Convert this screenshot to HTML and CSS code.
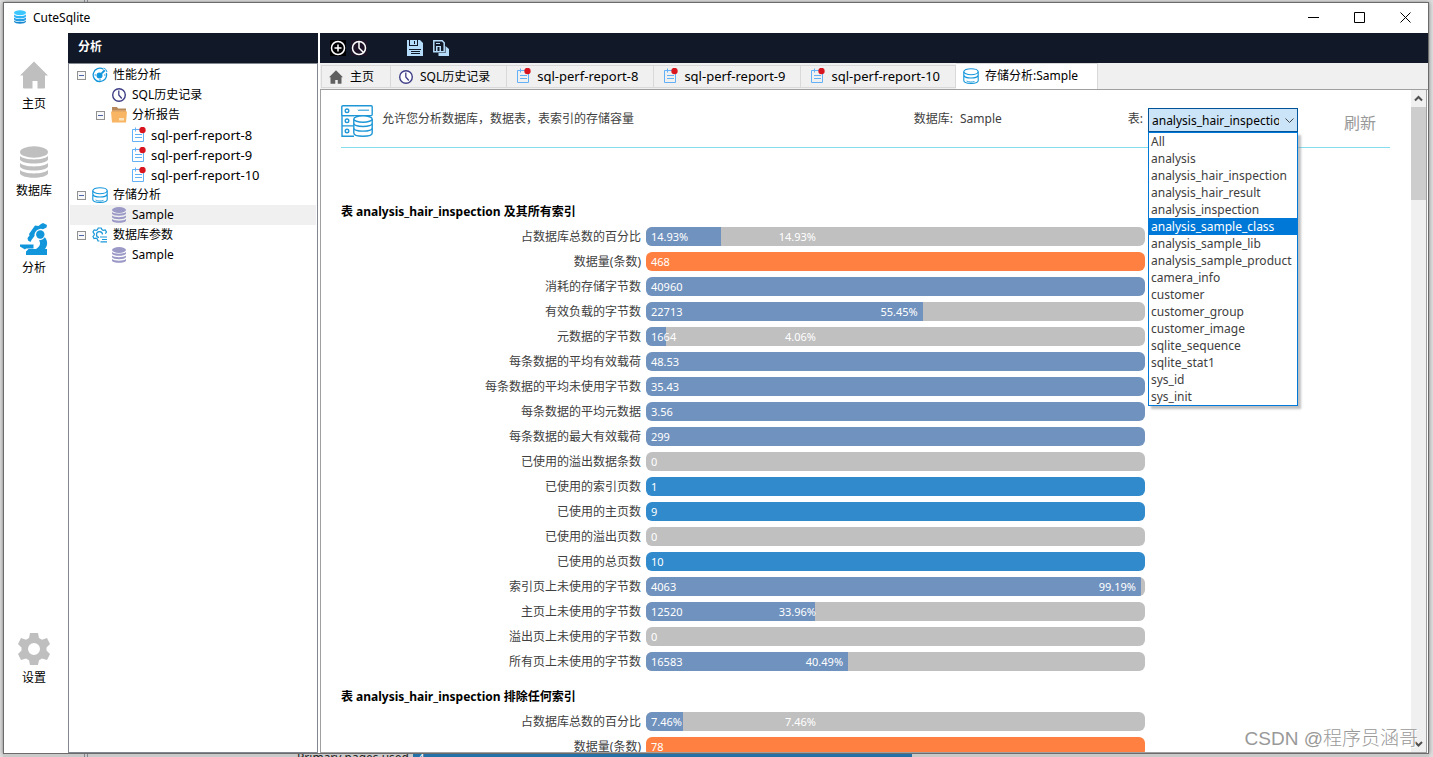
FILE: index.html
```html
<!DOCTYPE html>
<html lang="zh-CN">
<head>
<meta charset="utf-8">
<title>CuteSqlite</title>
<link rel="stylesheet" href="styles.css">
</head>
<body>
<svg class="symbols" aria-hidden="true">
  <symbol id="i-home" viewBox="0 0 32 32"><path d="M16 2.500 30 16.500h-3V28.500a1 1 0 0 1-1 1h-6.500v-7.500h-5v7.500H6a1 1 0 0 1-1-1V16.500H2z" fill="currentColor"/></symbol>
  <symbol id="i-dbsolid" viewBox="0 0 32 32"><g fill="currentColor"><ellipse cx="16" cy="6" rx="14" ry="5.800"/><path d="M2 10c4 4.500 24 4.500 28 0v3.500c-2 5.300-26 5.300-28 0zM2 17c4 4.500 24 4.500 28 0v3.500c-2 5.300-26 5.300-28 0zM2 24c4 4.500 24 4.500 28 0v3.500c-2 5.600-26 5.600-28 0z"/></g></symbol>
  <symbol id="i-scope" viewBox="0 0 32 32"><g fill="#1296db"><path d="m23 1 2-1 4 2-.5 2.500-2 1-1.500.7a6.500 6.500 0 0 0-8.500 6.800L13.500 17l-1 2-2.500-1.500-.5-2.500 2-2.500-.5-1.500 6-8.500 3.500.5z"/><circle cx="22.300" cy="11.500" r="4.200"/><path d="M21 17.200c2.500 0 4.500-1 5.800-3 3 3.300 3.200 7.800.2 11.800h2v6H8v-3.500L10.500 26H18c4-2.500 5-5.500 3-8.800z"/><path d="M2 21.500h13.500v4H8l-1 1-5-3z"/></g></symbol>
  <symbol id="i-gear" viewBox="0 0 32 32"><path fill="#bfbfbf" fill-rule="evenodd" d="M12 0h8l1 5 3 1.700 5-1.700 3 6-3.500 3.500v3L32 21l-3 6-5-1.500-3 1.800-1 4.700h-8l-1-4.700-3-1.800L3 27l-3-6 3.500-3.500v-3L0 11l3-6 5 1.700L11 5zM16 10a6 6 0 1 0 0 12 6 6 0 0 0 0-12z"/></symbol>
  <symbol id="i-perf" viewBox="0 0 16 16"><g fill="none" stroke="#1296db" stroke-width="1.300"><path d="M11.500 2.300A6.700 6.700 0 1 0 14.300 6"/><path d="M12 .800A8 8 0 0 1 15 5M2.500 8h1.500M8 12v1.800M13.500 8H12" stroke-width="1"/></g><circle cx="7.500" cy="8.500" r="3" fill="#1296db"/><path d="m7 8 5-5.500 1.500 1.500-5.500 5z" fill="#1296db"/></symbol>
  <symbol id="i-clock" viewBox="0 0 16 16"><circle cx="8" cy="8" r="6.300" fill="#fff" stroke="#3f3f87" stroke-width="1.400"/><path d="M7.800 3.500V8l3 3.500" fill="none" stroke="#3f3f87" stroke-width="1.300"/></symbol>
  <symbol id="i-folder" viewBox="0 0 16 16"><path d="M1 0h5l1 1.500h8V8H1z" fill="#b88a5b"/><path d="M1 3h14v3H1z" fill="#d9a066"/><path d="M0 4.500h16l-1 11H1z" fill="#f8b563"/><path d="M8 11h5v2.500H8z" fill="#fbe3bd"/></symbol>
  <symbol id="i-report" viewBox="0 0 16 16"><path d="M2.500 2.500h11v12h-11zM5.500.500v4M5 7.500h7M5 10.500h7" fill="none" stroke="#62b0f5"/><circle cx="12.500" cy="3" r="3.200" fill="#d8151f"/></symbol>
  <symbol id="i-dbline" viewBox="0 0 16 16"><g fill="none" stroke="#1296db" stroke-width="1.100"><ellipse cx="8" cy="3.700" rx="7.200" ry="3"/><path d="M.800 3.700v8.800c0 3.800 14.400 3.800 14.400 0V3.700M1 7.500c1 3.400 13 3.400 14 0"/><path d="M3.500 13c2 1 5 1.400 8 .4" stroke-width=".8"/></g></symbol>
  <symbol id="i-param" viewBox="0 0 16 16"><g fill="none" stroke="#1b98d9" stroke-width="1.200"><path d="M7.500 14H6l-.7-2-1.300-.8-2 .4L1 9.500l1.300-1.700v-1L1 5l1.200-2 2 .4L5.500 2.500 6.200 1h3l.7 1.500 1.300.9 2-.4L14.500 5l-1.200 1.700"/><path d="M7 10.500a3 3 0 1 1 3.500-3M8 10h7M10 12.500h5M8.500 14.800H15"/></g></symbol>
  <symbol id="i-server" viewBox="0 0 32 32"><g fill="none" stroke="#1f97d6" stroke-width="1.400"><rect x=".8" y=".8" width="30.400" height="9.800" rx="1"/><path d="M13 10.600H1v10.300h11M12 20.900H1v10.300h12"/><circle cx="6" cy="5.800" r="1.800"/><circle cx="6" cy="15.800" r="1.800"/><circle cx="6" cy="26" r="1.800"/><path d="m17 4.500 1 1.500 1-1.500 1 1.500 1-1.500 1 1.500 1-1.500 1 1.500 1-1.500 1 1.500 1-1.500 1 1.500" stroke-width=".8"/></g><g fill="#fff" stroke="#1f97d6" stroke-width="1.400"><path d="M12.800 14v14c0 4.300 18.400 4.300 18.400 0V14"/><ellipse cx="22" cy="14" rx="9.200" ry="3.200"/><path d="M12.800 18.800c1 3.500 17.400 3.500 18.400 0M12.800 23.500c1 3.500 17.400 3.500 18.400 0" fill="none"/></g></symbol>
</svg>

<div class="desktop">
  <div class="backdrop-top"><i class="rail"></i></div>
  <div class="window">
    <header class="titlebar">
      <svg class="app-icon" viewBox="0 0 14 14"><ellipse cx="7" cy="2.700" rx="6" ry="2.500" fill="#3cc8ff"/><path d="M1 4.500c2 2 10 2 12 0v2c-1 2.500-11 2.500-12 0z" fill="#2fb4f5"/><path d="M1 7.500c2 2 10 2 12 0v2c-1 2.500-11 2.500-12 0z" fill="#259fe6"/><path d="M1 10.500c2 2 10 2 12 0v1c-1 3-11 3-12 0z" fill="#1788d0"/></svg>
      <h1 class="app-name">CuteSqlite</h1>
      <button class="win-btn" aria-label="最小化"><svg viewBox="0 0 11 11"><path d="M0 5.500h11"/></svg></button>
      <button class="win-btn" aria-label="最大化"><svg viewBox="0 0 11 11"><path d="M.5.5h10v10H.5z"/></svg></button>
      <button class="win-btn" aria-label="关闭"><svg viewBox="0 0 11 11"><path d="m.5.500 10 10M10.500.500l-10 10"/></svg></button>
    </header>

    <div class="workspace">
      <nav class="rail-nav">
        <button class="nav-item nav-home"><svg><use href="#i-home"/></svg>主页</button>
        <button class="nav-item"><svg><use href="#i-dbsolid"/></svg>数据库</button>
        <button class="nav-item"><svg><use href="#i-scope"/></svg>分析</button>
        <button class="nav-item nav-settings"><svg><use href="#i-gear"/></svg>设置</button>
      </nav>

      <aside class="side">
        <h2 class="side-title">分析</h2>
        <ul class="tree">
          <li class="node level-0"><button class="toggle" aria-label="折叠"></button><svg><use href="#i-perf"/></svg>性能分析</li>
          <li class="node level-1"><i class="toggle-space"></i><svg><use href="#i-clock"/></svg>SQL历史记录</li>
          <li class="node level-1"><button class="toggle" aria-label="折叠"></button><svg><use href="#i-folder"/></svg>分析报告</li>
          <li class="node level-2 report-name"><i class="toggle-space"></i><svg><use href="#i-report"/></svg>sql-perf-report-8</li>
          <li class="node level-2 report-name"><i class="toggle-space"></i><svg><use href="#i-report"/></svg>sql-perf-report-9</li>
          <li class="node level-2 report-name"><i class="toggle-space"></i><svg><use href="#i-report"/></svg>sql-perf-report-10</li>
          <li class="node level-0"><button class="toggle" aria-label="折叠"></button><svg><use href="#i-dbline"/></svg>存储分析</li>
          <li class="node level-1 selected"><i class="toggle-space"></i><svg class="violet"><use href="#i-dbsolid"/></svg>Sample</li>
          <li class="node level-0"><button class="toggle" aria-label="折叠"></button><svg><use href="#i-param"/></svg>数据库参数</li>
          <li class="node level-1"><i class="toggle-space"></i><svg class="violet"><use href="#i-dbsolid"/></svg>Sample</li>
        </ul>
      </aside>

      <main class="main">
        <div class="toolbar">
          <button class="tool" aria-label="新建"><svg viewBox="0 0 16 16"><path fill="#000" d="M0 0h16v16H0z"/><g fill="none" stroke="#fff" stroke-width="1.500"><circle cx="8" cy="8" r="6.500"/><path d="M8 4.500v7M4.500 8h7"/></g></svg></button>
          <button class="tool" aria-label="历史"><svg viewBox="0 0 16 16"><path fill="#1d1226" d="M0 0h16v16H0z"/><g fill="none" stroke="#fff" stroke-width="1.500"><circle cx="8" cy="8" r="6.500"/><path d="M8 1.500V8l4.500 4.500"/></g></svg></button>
          <button class="tool tool-save" aria-label="保存"><svg viewBox="0 0 16 16"><path fill="#b5dcfb" d="M0 0h13l3 3v13H0z"/><path fill="#111827" d="M2 0h1v6H2zM3 5h8v1H3zM10 0h1v6h-1z"/><path fill="#111827" d="M7 1h1v3H7zM2 9h12v1H2zM4 11h9v1H4zM4 13h9v1H4z"/></svg></button>
          <button class="tool tool-save-all" aria-label="全部保存"><svg viewBox="0 0 16 16"><path fill="none" stroke="#b5dcfb" stroke-width="1.500" d="M.8.800h8.400l2 2v9H.800z"/><path fill="#b5dcfb" d="M3 3h4v1H3zM3 6h5v6H3z"/><path fill="#111827" d="M4.500 7h2v4h-2z"/><path fill="#b5dcfb" d="M12.500 6 16 9v7H5.500v-3h7z"/></svg></button>
        </div>

        <div class="tabs" role="tablist">
          <button class="tab" role="tab"><svg class="gray"><use href="#i-home"/></svg>主页</button>
          <button class="tab" role="tab"><svg><use href="#i-clock"/></svg>SQL历史记录</button>
          <button class="tab report-name" role="tab"><svg><use href="#i-report"/></svg>sql-perf-report-8</button>
          <button class="tab report-name" role="tab"><svg><use href="#i-report"/></svg>sql-perf-report-9</button>
          <button class="tab report-name" role="tab"><svg><use href="#i-report"/></svg>sql-perf-report-10</button>
          <button class="tab active" role="tab" aria-selected="true"><svg><use href="#i-dbline"/></svg>存储分析:Sample</button>
        </div>

        <div class="page">
          <div class="content">
            <div class="filter">
              <svg class="server"><use href="#i-server"/></svg>
              <p class="intro">允许您分析数据库，数据表，表索引的存储容量</p>
              <p class="database"><span>数据库:</span><span>Sample</span></p>
              <label class="table-label" for="table">表:</label>
              <div class="combo">
                <select id="table" class="combo-box"><option>analysis_hair_inspection</option></select>
                <svg class="chevron" viewBox="0 0 9 9"><path d="m.5 2.500 4 4 4-4"/></svg>
                <ul class="options" role="listbox">
                  <li>All</li><li>analysis</li><li>analysis_hair_inspection</li><li>analysis_hair_result</li><li>analysis_inspection</li><li class="hover">analysis_sample_class</li><li>analysis_sample_lib</li><li>analysis_sample_product</li><li>camera_info</li><li>customer</li><li>customer_group</li><li>customer_image</li><li>sqlite_sequence</li><li>sqlite_stat1</li><li>sys_id</li><li>sys_init</li>
                </ul>
              </div>
              <button class="refresh">刷新</button>
            </div>

            <section class="report">
              <h3>表 analysis_hair_inspection 及其所有索引</h3>
              <div class="row"><span>占数据库总数的百分比</span><div class="bar"><i style="width:14.93%"></i><b style="width:14.93%">14.93%</b><em>14.93%</em></div></div>
              <div class="row"><span>数据量(条数)</span><div class="bar orange"><em>468</em></div></div>
              <div class="row"><span>消耗的存储字节数</span><div class="bar steel"><em>40960</em></div></div>
              <div class="row"><span>有效负载的字节数</span><div class="bar"><i style="width:55.45%"></i><b style="width:55.45%">55.45%</b><em>22713</em></div></div>
              <div class="row"><span>元数据的字节数</span><div class="bar"><i style="width:4.06%"></i><b style="width:4.06%">4.06%</b><em>1664</em></div></div>
              <div class="row"><span>每条数据的平均有效载荷</span><div class="bar steel"><em>48.53</em></div></div>
              <div class="row"><span>每条数据的平均未使用字节数</span><div class="bar steel"><em>35.43</em></div></div>
              <div class="row"><span>每条数据的平均元数据</span><div class="bar steel"><em>3.56</em></div></div>
              <div class="row"><span>每条数据的最大有效载荷</span><div class="bar steel"><em>299</em></div></div>
              <div class="row"><span>已使用的溢出数据条数</span><div class="bar"><em>0</em></div></div>
              <div class="row"><span>已使用的索引页数</span><div class="bar blue"><em>1</em></div></div>
              <div class="row"><span>已使用的主页数</span><div class="bar blue"><em>9</em></div></div>
              <div class="row"><span>已使用的溢出页数</span><div class="bar"><em>0</em></div></div>
              <div class="row"><span>已使用的总页数</span><div class="bar blue"><em>10</em></div></div>
              <div class="row"><span>索引页上未使用的字节数</span><div class="bar"><i style="width:99.19%"></i><b style="width:99.19%">99.19%</b><em>4063</em></div></div>
              <div class="row"><span>主页上未使用的字节数</span><div class="bar"><i style="width:33.96%"></i><b style="width:33.96%">33.96%</b><em>12520</em></div></div>
              <div class="row"><span>溢出页上未使用的字节数</span><div class="bar"><em>0</em></div></div>
              <div class="row"><span>所有页上未使用的字节数</span><div class="bar"><i style="width:40.49%"></i><b style="width:40.49%">40.49%</b><em>16583</em></div></div>
            </section>
            <section class="report">
              <h3>表 analysis_hair_inspection 排除任何索引</h3>
              <div class="row"><span>占数据库总数的百分比</span><div class="bar"><i style="width:7.46%"></i><b style="width:7.46%">7.46%</b><em>7.46%</em></div></div>
              <div class="row"><span>数据量(条数)</span><div class="bar orange"><em>78</em></div></div>
            </section>
          </div>
          <div class="scrollbar">
            <svg class="arrow" viewBox="0 0 9 9"><path d="m1 6.500 3.500-3.500L8 6.500"/></svg>
            <div class="thumb"></div>
            <svg class="arrow arrow-down" viewBox="0 0 9 9"><path d="m1 3 3.500 3.500L8 3"/></svg>
          </div>
        </div>
      </main>
    </div>
  </div>
  <div class="backdrop-bottom"><i class="rail"></i><span class="under-label">Primary pages used</span><div class="under-bar">4</div></div>
  <div class="watermark">CSDN @程序员涵哥</div>
</div>
</body>
</html>
```

FILE: styles.css
```css
* { box-sizing: border-box; }
body, h1, h2, h3, p, ul { margin: 0; padding: 0; }
ul { list-style: none; }
svg { display: block; flex: none; }
button { border: 0; padding: 0; background: none; font: inherit; color: inherit; }
body, select {
  font-family: "Noto Sans", "Noto Sans CJK SC", sans-serif;
  font-size: 12px;
}
body { color: #000; line-height: 20px; }
.symbols { position: absolute; width: 0; height: 0; }

.desktop {
  position: relative;
  display: flex;
  flex-direction: column;
  height: 100vh;
  overflow: hidden;
  padding: 0 4px 0 3px;
  background: #dedede;
}
.backdrop-top { height: 2px; padding-left: 81px; background: #e6e6e6; flex: none; }
.rail { display: block; width: 4px; height: 100%; border: solid #82878f; border-width: 0 1px; }
.backdrop-bottom { display: flex; height: 3px; padding-left: 81px; overflow: hidden; background: #c9c9c9; flex: none; }
.backdrop-bottom .rail { height: 3px; }
.under-label { width: 321px; text-align: right; line-height: 8px; color: #222; }
.under-bar { width: 499px; margin-left: 4px; padding-left: 5px; background: #2471a8; color: #fff; font-size: 11px; line-height: 8px; }

.window {
  flex: 1;
  min-height: 0;
  display: flex;
  flex-direction: column;
  background: #fff;
  border: 1px solid #6b6b6b;
  box-shadow: 0 0 4px #777;
}
.titlebar { display: flex; height: 30px; padding-left: 9px; flex: none; }
.app-icon { width: 14px; height: 14px; margin-top: 7px; }
.app-name { flex: 1; margin-left: 6px; font-size: 12px; font-weight: 400; line-height: 30px; }
.win-btn { display: grid; place-items: center; width: 46px; height: 28px; }
.win-btn svg { width: 11px; height: 11px; fill: none; stroke: #000; }

.workspace { flex: 1; min-height: 0; display: flex; }
.rail-nav { display: flex; flex-direction: column; gap: 23px; width: 64px; padding: 26px 4px 66px 0; }
.nav-item { display: flex; flex-direction: column; align-items: center; gap: 4px; line-height: 18px; }
.nav-item svg { width: 32px; height: 32px; color: #bfbfbf; }
.nav-home { margin-bottom: 10px; }
.nav-settings { margin-top: auto; }

.side { display: flex; flex-direction: column; width: 250px; margin-right: 2px; flex: none; }
.side-title { height: 30px; padding-left: 10px; background: #111827; color: #fff; font-size: 12px; line-height: 28px; }
.tree { flex: 1; padding: 1px; border: 1px solid #828790; }
.node { display: flex; align-items: center; height: 20px; line-height: 20px; }
.node svg { width: 16px; height: 16px; margin: 0 5px 0 6px; }
.level-0 { padding-left: 7px; }
.level-1 { padding-left: 26px; }
.level-2 { padding-left: 45px; }
.selected { background: #f0f0f0; }
.violet { color: #9b99c6; }
.report-name { padding-bottom: 1px; font-size: 13px; }
.toggle, .toggle-space { width: 9px; height: 9px; flex: none; }
.toggle { border: 1px solid #919191; background: linear-gradient(#4b63a7, #4b63a7) center / 5px 1px no-repeat #f7f7f7; }

.main { flex: 1; min-width: 0; display: flex; flex-direction: column; }
.toolbar { display: flex; align-items: center; height: 30px; padding-left: 10px; background: #111827; flex: none; }
.tool { width: 16px; height: 16px; margin-right: 5px; }
.tool-save { margin-left: 35px; margin-right: 10px; }

.tabs { display: flex; align-items: flex-start; height: 27px; padding-left: 1px; background: #f0f0f0; border-bottom: 1px solid #a0a0a0; flex: none; }
.tab { display: flex; align-items: center; gap: 6px; height: 23px; margin-top: 2px; padding: 0 16px 0 7px; border: 1px solid #d9d9d9; border-left-width: 0; }
.tab:first-child { border-left-width: 1px; padding-left: 6px; }
.tab svg { width: 16px; height: 16px; }
.tab.report-name { padding: 0 15px 1px 8px; }
.gray { color: #606060; }
.tab.active { height: 26px; margin-top: 0; padding: 0 19px 2px 7px; background: #fff; border-bottom: 0; }

.page { flex: 1; min-height: 0; display: flex; margin-right: 1px; border: 1px solid #a0a0a0; border-top: 0; }
.content { flex: 1; min-width: 0; overflow: hidden; padding: 15px 21px 0 20px; }
.filter { display: flex; align-items: flex-start; height: 43px; margin-bottom: 51px; border-bottom: 1px solid #84dded; color: #404040; }
.server { width: 32px; height: 32px; }
.intro { flex: 1; margin-left: 9px; line-height: 28px; }
.database { display: flex; gap: 7px; width: 214px; line-height: 28px; }
.table-label { line-height: 28px; margin-right: 5px; }
.combo { position: relative; width: 150px; margin-top: 3px; flex: none; }
.combo-box {
  display: block;
  width: 100%;
  height: 24px;
  padding: 0 18px 0 3px;
  appearance: none;
  border: 1px solid #005499;
  border-radius: 0;
  background: #cce4f7;
  color: #000;
}
.chevron { position: absolute; top: 8px; right: 4px; width: 9px; height: 9px; fill: none; stroke: #444; pointer-events: none; }
.options {
  position: absolute;
  z-index: 2;
  top: 24px;
  left: 0;
  width: 100%;
  border: 1px solid #0078d7;
  background: #fff;
  box-shadow: 3px 3px 2px #8888;
}
.options li { height: 17px; padding-left: 2px; line-height: 17px; white-space: nowrap; }
.options .hover { background: #0078d7; color: #fff; }
.refresh { margin: 0 14px 0 46px; color: #999; font-size: 16px; line-height: 36px; }

.report { margin-bottom: 10px; }
.report h3 { font-size: 12px; font-weight: 700; line-height: 25px; }
.row { display: grid; grid-template-columns: 300px minmax(200px, 499px); column-gap: 5px; align-items: center; height: 25px; color: #404040; }
.row > span { text-align: right; }
.bar { display: grid; height: 19px; overflow: hidden; border-radius: 6px; background: #c0c0c0; color: #fff; font-family: "Noto Sans", sans-serif; font-size: 11px; line-height: 19px; }
.bar > * { grid-area: 1 / 1; font-style: normal; font-weight: 400; }
.bar i { background: #7092be; }
.bar b { min-width: 175px; padding-right: 5px; text-align: right; }
.bar em { padding-left: 5px; }
.bar.steel { background: #7092be; }
.bar.orange { background: #ff8040; }
.bar.blue { background: #308acb; }

.scrollbar { display: flex; flex-direction: column; align-items: center; width: 15px; background: #f0f0f0; flex: none; }
.arrow { width: 9px; height: 9px; margin: 4px 0; fill: none; stroke: #505050; stroke-width: 2; }
.arrow-down { margin-top: auto; }
.thumb { width: 100%; height: 93px; background: #cdcdcd; }

.watermark {
  position: absolute;
  right: 15px;
  bottom: 4px;
  color: #999;
  font-family: "Liberation Sans", "Noto Sans CJK SC", sans-serif;
  font-size: 19px;
  font-weight: 300;
  line-height: 28px;
  text-shadow: 1px 1px 0 #fff;
}
```
